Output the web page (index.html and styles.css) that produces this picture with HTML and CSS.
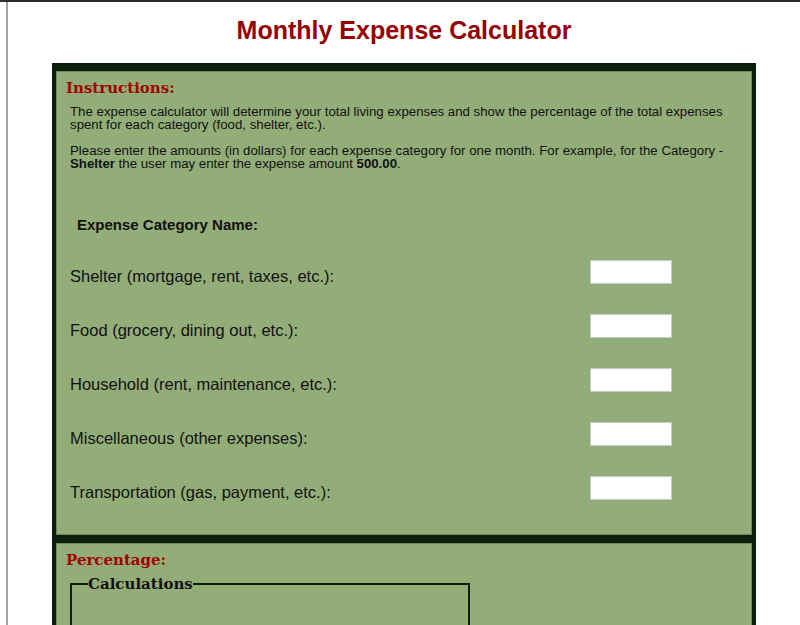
FILE: index.html
```html
<!DOCTYPE html>
<html>
<head>
<meta charset="utf-8">
<link rel="stylesheet" href="styles.css">
</head>
<body>
<div class="frame">
  <h1 class="title">Monthly Expense Calculator</h1>
  <div class="calc">
    <section class="panel panel-top">
      <h2 class="heading">Instructions:</h2>
      <p class="info">The expense calculator will determine your total living expenses and show the percentage of the total expenses spent for each category (food, shelter, etc.).</p>
      <p class="info">Please enter the amounts (in dollars) for each expense category for one month. For example, for the Category - <b>Shelter</b> the user may enter the expense amount <b>500.00</b>.</p>
      <div class="cat-head">Expense Category Name:</div>
      <div class="rows">
        <div class="row"><label class="lbl">Shelter (mortgage, rent, taxes, etc.):</label><input class="amt" type="text"></div>
        <div class="row"><label class="lbl">Food (grocery, dining out, etc.):</label><input class="amt" type="text"></div>
        <div class="row"><label class="lbl">Household (rent, maintenance, etc.):</label><input class="amt" type="text"></div>
        <div class="row"><label class="lbl">Miscellaneous (other expenses):</label><input class="amt" type="text"></div>
        <div class="row"><label class="lbl">Transportation (gas, payment, etc.):</label><input class="amt" type="text"></div>
      </div>
    </section>
    <section class="panel panel-bottom">
      <h2 class="heading">Percentage:</h2>
      <fieldset class="calcs">
        <legend class="calcs-legend">Calculations</legend>
        <div class="calcs-body"></div>
      </fieldset>
    </section>
  </div>
</div>
</body>
</html>
```
FILE: styles.css
```css
html, body {
  margin: 0;
  padding: 0;
  background: #ffffff;
  overflow: hidden;
}
body {
  border-top: 2px solid #2b2b2b;
  font-family: "Liberation Sans", Arial, sans-serif;
  color: #111;
}
.frame {
  margin-left: 6px;
  border-left: 2px solid #a3a3a3;
  height: 640px;
  padding-top: 14px;
}
.title {
  margin: 0;
  text-align: center;
  font-size: 25px;
  font-weight: bold;
  color: #960000;
  line-height: 28px;
}
.calc {
  width: 696px;
  margin: 19px auto 0;
  background: #0a1f0a;
  padding: 8px 4px 0;
  display: flex;
  flex-direction: column;
  gap: 8px;
}
.panel {
  background: #93ad78;
  border: 1px solid #6f8a5a;
  padding: 6px 8px 0 9px;
}
.panel-top {
  height: 456px;
}
.panel-bottom {
  height: 120px;
}
.heading {
  margin: 0;
  font-family: "DejaVu Serif", Georgia, serif;
  font-size: 15px;
  font-weight: bold;
  color: #a00000;
  line-height: 20px;
}
.info {
  margin: 7px 0 0 4px;
  font-size: 13.25px;
  line-height: 13px;
  width: 664px;
}
.info + .info {
  margin-top: 13px;
}
.cat-head {
  margin: 46px 0 0 11px;
  font-size: 15px;
  font-weight: bold;
  line-height: 18px;
}
.rows {
  margin-top: 26px;
  display: flex;
  flex-direction: column;
  gap: 30px;
  padding-left: 4px;
}
.row {
  display: grid;
  grid-template-columns: 520px 82px;
  align-items: start;
  height: 24px;
}
.lbl {
  font-size: 16.5px;
  line-height: 18px;
  padding-top: 7px;
}
.amt {
  width: 82px;
  height: 24px;
  box-sizing: border-box;
  border: 1px solid #c8c8c8;
  background: #fff;
  margin: 0;
  padding: 0;
}
.calcs {
  margin: 5px 0 0 4px;
  width: 396px;
  border: 2px solid #0a1f0a;
  padding: 0;
  height: 80px;
}
.calcs-legend {
  font-family: "DejaVu Serif", Georgia, serif;
  font-weight: bold;
  font-size: 15px;
  padding: 0;
  margin-left: 16px;
  color: #111;
}
```
